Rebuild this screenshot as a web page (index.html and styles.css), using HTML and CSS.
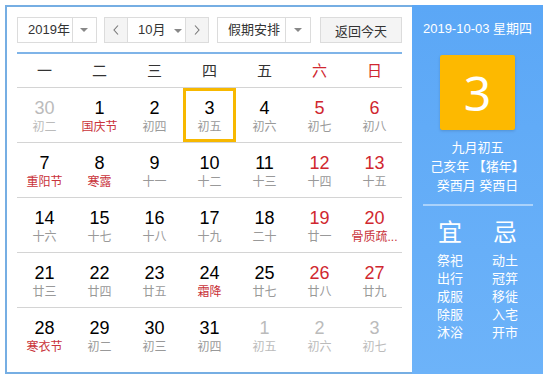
FILE: index.html
```html
<!DOCTYPE html>
<html lang="zh">
<head>
    <meta charset="UTF-8">
    <title>万年历</title>
    <link rel="stylesheet" href="styles.css">
</head>
<body>

    <div class="calendar">
        <div class="main">
            <!-- Barra de selección -->
            <div class="toolbar">
                <div class="select year">
                    <span class="select-text">2019年</span>
                    <span class="select-arrow"><i class="caret"></i></span>
                </div>
                <div class="month-group">
                    <span class="nav">
                        <svg width="6" height="10" viewBox="0 0 6 10"><polyline points="5,0.5 1,5 5,9.5" fill="none" stroke="#777" stroke-width="1.1"/></svg>
                    </span>
                    <span class="month">10月 <i class="caret"></i></span>
                    <span class="nav next">
                        <svg width="6" height="10" viewBox="0 0 6 10"><polyline points="1,0.5 5,5 1,9.5" fill="none" stroke="#777" stroke-width="1.1"/></svg>
                    </span>
                </div>
                <div class="select holiday">
                    <span class="select-text">假期安排</span>
                    <span class="select-arrow"><i class="caret"></i></span>
                </div>
                <button class="today-btn">返回今天</button>
            </div>

            <div class="weekdays">
                <span>一</span><span>二</span><span>三</span><span>四</span><span>五</span>
                <span class="red">六</span><span class="red">日</span>
            </div>

            <div class="week">
                <div class="day other"><b>30</b><em>初二</em></div>
                <div class="day"><b>1</b><em class="fest">国庆节</em></div>
                <div class="day"><b>2</b><em>初四</em></div>
                <div class="day today"><b>3</b><em>初五</em></div>
                <div class="day"><b>4</b><em>初六</em></div>
                <div class="day weekend"><b>5</b><em>初七</em></div>
                <div class="day weekend"><b>6</b><em>初八</em></div>
            </div>
            <div class="week">
                <div class="day"><b>7</b><em class="fest">重阳节</em></div>
                <div class="day"><b>8</b><em class="fest">寒露</em></div>
                <div class="day"><b>9</b><em>十一</em></div>
                <div class="day"><b>10</b><em>十二</em></div>
                <div class="day"><b>11</b><em>十三</em></div>
                <div class="day weekend"><b>12</b><em>十四</em></div>
                <div class="day weekend"><b>13</b><em>十五</em></div>
            </div>
            <div class="week">
                <div class="day"><b>14</b><em>十六</em></div>
                <div class="day"><b>15</b><em>十七</em></div>
                <div class="day"><b>16</b><em>十八</em></div>
                <div class="day"><b>17</b><em>十九</em></div>
                <div class="day"><b>18</b><em>二十</em></div>
                <div class="day weekend"><b>19</b><em>廿一</em></div>
                <div class="day weekend"><b>20</b><em class="fest">骨质疏...</em></div>
            </div>
            <div class="week">
                <div class="day"><b>21</b><em>廿三</em></div>
                <div class="day"><b>22</b><em>廿四</em></div>
                <div class="day"><b>23</b><em>廿五</em></div>
                <div class="day"><b>24</b><em class="fest">霜降</em></div>
                <div class="day"><b>25</b><em>廿七</em></div>
                <div class="day weekend"><b>26</b><em>廿八</em></div>
                <div class="day weekend"><b>27</b><em>廿九</em></div>
            </div>
            <div class="week last">
                <div class="day"><b>28</b><em class="fest">寒衣节</em></div>
                <div class="day"><b>29</b><em>初二</em></div>
                <div class="day"><b>30</b><em>初三</em></div>
                <div class="day"><b>31</b><em>初四</em></div>
                <div class="day other"><b>1</b><em>初五</em></div>
                <div class="day other"><b>2</b><em>初六</em></div>
                <div class="day other"><b>3</b><em>初七</em></div>
            </div>
        </div>

        <!-- Panel lateral -->
        <div class="side">
            <div class="side-date">2019-10-03 星期四</div>
            <div class="big-day">3</div>
            <div class="lunar">
                <p>九月初五</p>
                <p>己亥年 【猪年】</p>
                <p>癸酉月 癸酉日</p>
            </div>
            <div class="divider"></div>
            <div class="yiji">
                <div class="col">
                    <h3>宜</h3>
                    <p>祭祀</p><p>出行</p><p>成服</p><p>除服</p><p>沐浴</p>
                </div>
                <div class="col">
                    <h3>忌</h3>
                    <p>动土</p><p>冠笄</p><p>移徙</p><p>入宅</p><p>开市</p>
                </div>
            </div>
        </div>
    </div>

</body>
</html>
```
FILE: styles.css
```css
/* General */
body {
    margin: 0;
    background: #fff;
    font-family: "Liberation Sans", "Noto Sans CJK SC", sans-serif;
    color: #333;
}

.calendar {
    display: flex;
    width: 538px;
    height: 369px;
    margin: 5px;
}

/* Parte izquierda */
.main {
    width: 407px;
    box-sizing: border-box;
    border: 2px solid #76aee3;
    border-right: none;
    padding: 10px 10px 0 10px;
    background: #fff;
}

.toolbar {
    display: flex;
    height: 26px;
    margin-bottom: 9px;
    font-size: 13px;
}

.select {
    display: flex;
    height: 26px;
    box-sizing: border-box;
    border: 1px solid #dcdcdc;
    background: #fff;
}

.select-text {
    line-height: 24px;
    padding-left: 10px;
}

.select-arrow {
    display: flex;
    align-items: center;
    justify-content: center;
    width: 24px;
    border-left: 1px solid #dcdcdc;
}

.year {
    width: 80px;
}

.year .select-text {
    width: 45px;
}

.holiday {
    width: 94px;
    margin-left: 8px;
}

.holiday .select-text {
    width: 58px;
}

.caret {
    display: inline-block;
    width: 0;
    height: 0;
    border-left: 4px solid transparent;
    border-right: 4px solid transparent;
    border-top: 4px solid #888;
    vertical-align: middle;
}

.month-group {
    display: flex;
    width: 105px;
    height: 26px;
    box-sizing: border-box;
    margin-left: 7px;
    border: 1px solid #dcdcdc;
}

.nav {
    display: flex;
    align-items: center;
    justify-content: center;
    width: 22px;
    background: #f4f4f4;
    border-right: 1px solid #dcdcdc;
}

.nav.next {
    border-right: none;
    border-left: 1px solid #dcdcdc;
}

.month {
    flex: 1;
    line-height: 24px;
    padding-left: 10px;
}

.month .caret {
    margin-left: 5px;
}

.today-btn {
    margin-left: 9px;
    width: 82px;
    height: 26px;
    border: 1px solid #dcdcdc;
    background: #f4f4f4;
    font-family: inherit;
    font-size: 13px;
    color: #333;
    padding: 0;
}

/* Encabezado de la semana */
.weekdays {
    display: grid;
    grid-template-columns: repeat(7, 55px);
    height: 33px;
    border-top: 2px solid #7fb4e8;
    border-bottom: 1px solid #d4d4d4;
    font-size: 15px;
    line-height: 33px;
    text-align: center;
    color: #333;
}

.red {
    color: #d0272f;
}

/* Días */
.week {
    display: grid;
    grid-template-columns: repeat(7, 55px);
    height: 54px;
    border-bottom: 1px solid #d4d4d4;
}

.week.last {
    border-bottom: none;
}

.day {
    display: flex;
    flex-direction: column;
    align-items: center;
    padding-top: 10px;
    min-width: 0;
}

.day b {
    font-weight: normal;
    font-size: 18px;
    line-height: 20px;
    color: #000;
}

.day em {
    font-style: normal;
    font-size: 12px;
    line-height: 18px;
    color: #999;
    white-space: nowrap;
}

.day.weekend b {
    color: #d0272f;
}

.day em.fest {
    color: #c9333a;
}

.day.other b,
.day.other em {
    color: #bbb;
}

.day.today {
    margin: 0 1px;
    box-shadow: inset 0 0 0 3px #f7b800;
}

/* Panel lateral */
.side {
    width: 131px;
    background: linear-gradient(#5ba7f6, #6db3f9);
    color: #fff;
    text-align: center;
    padding-top: 15px;
    box-sizing: border-box;
}

.side-date {
    font-size: 13px;
    line-height: 18px;
}

.big-day {
    width: 75px;
    height: 75px;
    margin: 17px auto 0;
    background: #fdb900;
    border-radius: 2px;
    box-shadow: 0 1px 3px rgba(0, 0, 0, 0.15);
    font-family: "Noto Sans", sans-serif;
    font-size: 48px;
    line-height: 75px;
}

.lunar {
    margin-top: 8px;
    font-size: 13px;
    line-height: 19px;
}

.lunar p {
    margin: 0;
}

.divider {
    height: 2px;
    margin: 9px 10px 0 11px;
    background: rgba(255, 255, 255, 0.45);
}

.yiji {
    display: flex;
    justify-content: center;
    margin-top: 10px;
}

.yiji .col {
    width: 55px;
}

.yiji h3 {
    margin: 0 0 2px;
    font-size: 24px;
    line-height: 34px;
    font-weight: normal;
}

.yiji p {
    margin: 0;
    font-size: 13px;
    line-height: 18px;
}
```
